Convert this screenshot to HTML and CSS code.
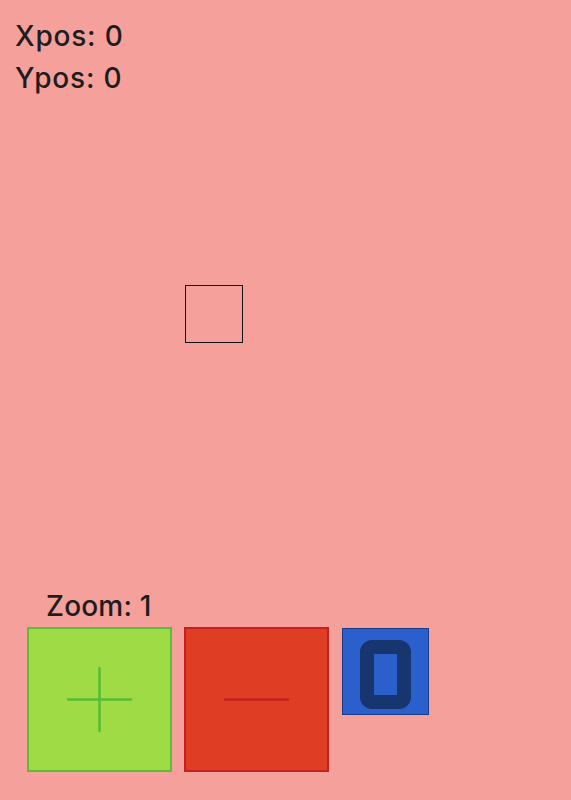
FILE: index.html
```html
<!DOCTYPE html>
<html>
<head>
<meta charset="utf-8">
<link rel="stylesheet" href="styles.css">
</head>
<body>
<div class="app">
  <div class="info">
    <div class="line">Xpos: 0</div>
    <div class="line">Ypos: 0</div>
  </div>
  <div class="canvas">
    <div class="box"></div>
  </div>
  <div class="controls">
    <div class="zoom">Zoom: 1</div>
    <div class="buttons">
      <div class="btn plus">
        <svg width="145" height="145" viewBox="0 0 145 145"><path d="M41 72.5H104M72.5 41V104" stroke="#55bd35" stroke-width="2.5" stroke-linecap="round" fill="none"/></svg>
      </div>
      <div class="btn minus">
        <svg width="145" height="145" viewBox="0 0 145 145"><path d="M41 72.5H104" stroke="#c4221f" stroke-width="2.5" stroke-linecap="round" fill="none"/></svg>
      </div>
      <div class="btn reset">
        <svg width="87" height="87" viewBox="0 0 87 87"><rect x="25" y="19" width="37" height="55" rx="5" fill="none" stroke="#17356f" stroke-width="14"/></svg>
      </div>
    </div>
  </div>
</div>
</body>
</html>
```
FILE: styles.css
```css
html, body {
  margin: 0;
  padding: 0;
}
body {
  background: #f5a09a;
  font-family: Inter, "Liberation Sans", sans-serif;
  font-weight: 500;
  color: #1d1d1f;
  width: 571px;
  height: 800px;
  overflow: hidden;
}
.app {
  display: flex;
  flex-direction: column;
  height: 800px;
}
.info {
  padding: 17px 0 0 15px;
  display: flex;
  flex-direction: column;
  gap: 4px;
}
.line {
  font-size: 28px;
  line-height: 38px;
  letter-spacing: 0.8px;
}
.canvas {
  flex: 1;
  position: relative;
}
.box {
  position: absolute;
  left: 185px;
  top: 188px;
  width: 56px;
  height: 56px;
  border: 1px solid #111;
}
.controls {
  padding: 0 0 28px 27px;
}
.zoom {
  font-size: 28px;
  line-height: 32px;
  margin-left: 19px;
  margin-bottom: 5px;
  letter-spacing: 0.2px;
}
.buttons {
  display: flex;
  align-items: flex-start;
  gap: 12px;
}
.btn {
  box-sizing: border-box;
  position: relative;
}
.btn svg {
  position: absolute;
  left: 0;
  top: 0;
  display: block;
}
.plus {
  width: 145px;
  height: 145px;
  background: #9edb45;
  border: 2px solid #5dbd39;
}
.plus svg, .minus svg {
  left: -2px;
  top: -2px;
}
.minus {
  width: 145px;
  height: 145px;
  background: #e03e24;
  border: 2px solid #c3201e;
}
.reset {
  margin-left: 1px;
  margin-top: 1px;
  width: 87px;
  height: 87px;
  background: #2b60cc;
  border: 1px solid #1a3a86;
}
.reset svg {
  left: -1px;
  top: -1px;
}
```
